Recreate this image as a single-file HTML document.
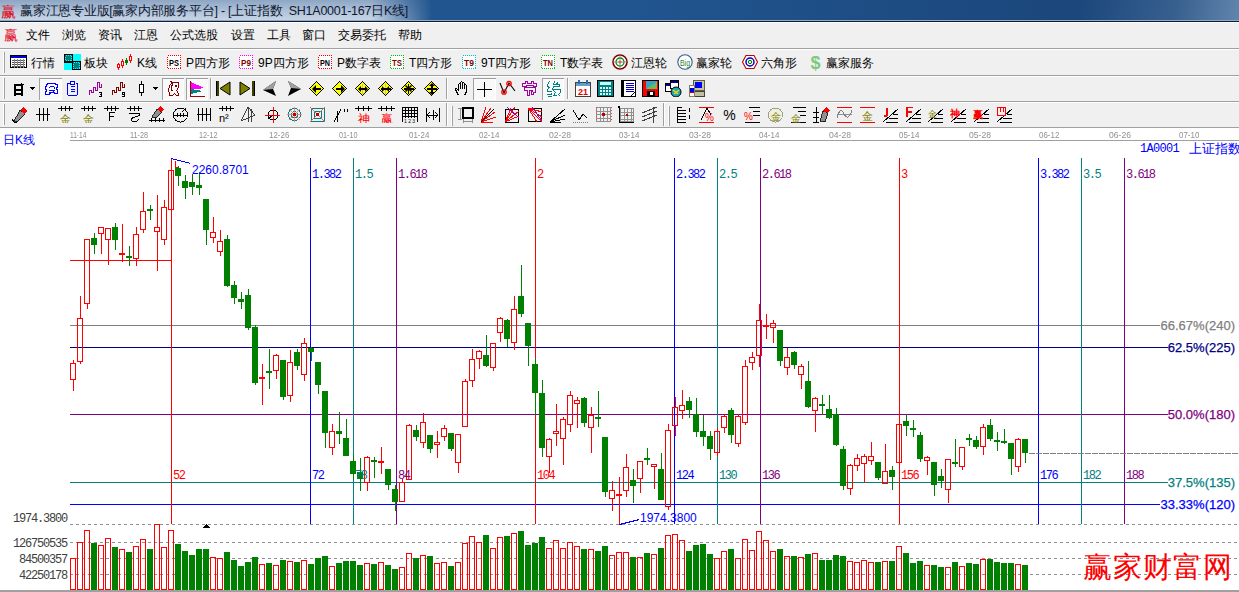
<!DOCTYPE html>
<html><head><meta charset="utf-8"><style>
html,body{margin:0;padding:0;}
body{width:1239px;height:592px;overflow:hidden;position:relative;background:#fff;font-family:"Liberation Sans", sans-serif;}
.t{position:absolute;white-space:nowrap;line-height:1;}
.r{position:absolute;}
.tb{font-size:12px;color:#000;}
svg{position:absolute;left:0;top:0;}
</style></head><body>
<div class="r" style="left:0px;top:0px;width:1239px;height:20px;background:linear-gradient(90deg,#21558f 0%,#21558f 50%,#1b477c 85%,#1b467a 100%);"></div><div class="r" style="left:0px;top:0px;width:432px;height:20px;background:linear-gradient(180deg,#8ea6c3 0%,#a9bdd6 45%,#bccde0 80%,#c6d4e4 100%);-webkit-mask-image:linear-gradient(90deg,#000 0%,#000 86%,transparent 100%);mask-image:linear-gradient(90deg,#000 0%,#000 86%,transparent 100%);"></div><div class="r" style="left:1080px;top:0px;width:159px;height:20px;background:linear-gradient(100deg,rgba(110,145,180,0) 0%,rgba(110,145,180,.35) 60%,rgba(120,155,190,.75) 100%);"></div><div class="r" style="left:0px;top:20px;width:1239px;height:1px;background:#8fabc9;"></div><div class="r" style="left:0px;top:21px;width:1239px;height:1px;background:#0f1e33;"></div><div class="t" style="left:1px;top:4px;font-size:15px;color:#e00010;">赢</div><div class="t" style="left:20px;top:5px;font-size:12.5px;color:#101830;letter-spacing:-0.25px;">赢家江恩专业版[赢家内部服务平台] - [上证指数&nbsp; SH1A0001-167日K线]</div><div class="r" style="left:0px;top:22px;width:1239px;height:26px;background:#f0f0f0;"></div><div class="r" style="left:0px;top:22px;width:1239px;height:1px;background:#ffffff;"></div><div class="r" style="left:0px;top:48px;width:1239px;height:1px;background:#a0a0a0;"></div><div class="r" style="left:0px;top:49px;width:1239px;height:1px;background:#ffffff;"></div><div class="t" style="left:4px;top:28px;font-size:14px;color:#e00018;">赢</div><div class="t" style="left:26px;top:29px;font-size:12px;color:#000;">文件</div><div class="t" style="left:62px;top:29px;font-size:12px;color:#000;">浏览</div><div class="t" style="left:98px;top:29px;font-size:12px;color:#000;">资讯</div><div class="t" style="left:134px;top:29px;font-size:12px;color:#000;">江恩</div><div class="t" style="left:170px;top:29px;font-size:12px;color:#000;">公式选股</div><div class="t" style="left:231px;top:29px;font-size:12px;color:#000;">设置</div><div class="t" style="left:267px;top:29px;font-size:12px;color:#000;">工具</div><div class="t" style="left:302px;top:29px;font-size:12px;color:#000;">窗口</div><div class="t" style="left:338px;top:29px;font-size:12px;color:#000;">交易委托</div><div class="t" style="left:398px;top:29px;font-size:12px;color:#000;">帮助</div><div class="r" style="left:0px;top:50px;width:1239px;height:77px;background:#f0f0f0;"></div><div class="r" style="left:0px;top:75px;width:1239px;height:1px;background:#a0a0a0;"></div><div class="r" style="left:0px;top:76px;width:1239px;height:1px;background:#ffffff;"></div><div class="r" style="left:0px;top:101px;width:1239px;height:1px;background:#a0a0a0;"></div><div class="r" style="left:0px;top:102px;width:1239px;height:1px;background:#ffffff;"></div><div class="r" style="left:0px;top:127px;width:1239px;height:1px;background:#a0a0a0;"></div><div class="r" style="left:3px;top:52px;width:1px;height:21px;background:#ffffff;"></div><div class="r" style="left:4px;top:52px;width:1px;height:21px;background:#a0a0a0;"></div><div class="r" style="left:3px;top:78px;width:1px;height:21px;background:#ffffff;"></div><div class="r" style="left:4px;top:78px;width:1px;height:21px;background:#a0a0a0;"></div><div class="r" style="left:3px;top:104px;width:1px;height:21px;background:#ffffff;"></div><div class="r" style="left:4px;top:104px;width:1px;height:21px;background:#a0a0a0;"></div><svg style="position:absolute;left:10px;top:55px" width="17" height="13" viewBox="0 0 17 13" shape-rendering="crispEdges"><rect x="0.5" y="0.5" width="16" height="12" fill="#fff" stroke="#000"/><rect x="1" y="1" width="15" height="2" fill="#0000e0"/><rect x="2" y="5" width="13" height="1" fill="#555"/><rect x="2" y="7" width="13" height="1" fill="#555"/><rect x="2" y="9" width="13" height="1" fill="#555"/><rect x="2" y="11" width="13" height="1" fill="#555"/><rect x="4" y="4" width="1" height="9" fill="#888"/><rect x="7" y="4" width="1" height="9" fill="#888"/><rect x="10" y="4" width="1" height="9" fill="#888"/><rect x="13" y="4" width="1" height="9" fill="#888"/></svg><svg style="position:absolute;left:64px;top:54px" width="17" height="16" viewBox="0 0 17 16" shape-rendering="crispEdges"><rect x="0" y="0" width="17" height="16" fill="#000"/><rect x="1" y="1" width="7" height="6" fill="#008080"/><rect x="1.5" y="1.5" width="6" height="5" fill="none" stroke="#00ffff" stroke-dasharray="1 1"/><rect x="9" y="0" width="8" height="7" fill="#00ffff"/><rect x="0" y="9" width="8" height="7" fill="#00ffff"/><rect x="9" y="8" width="7" height="7" fill="#008080"/><rect x="9.5" y="8.5" width="6" height="6" fill="none" stroke="#00ffff" stroke-dasharray="1 1"/></svg><svg style="position:absolute;left:117px;top:54px" width="16" height="16" viewBox="0 0 16 16" shape-rendering="crispEdges"><rect x="1" y="9" width="1" height="7" fill="#f00"/><rect x="0.5" y="10.5" width="2" height="3" fill="#fff" stroke="#f00"/><rect x="5" y="5" width="1" height="9" fill="#f00"/><rect x="4.5" y="7.5" width="2" height="4" fill="#fff" stroke="#f00"/><rect x="9" y="4" width="1" height="7" fill="#008000"/><rect x="8" y="6" width="3" height="3" fill="#008000"/><rect x="13" y="0" width="1" height="9" fill="#f00"/><rect x="12.5" y="2.5" width="2" height="4" fill="#fff" stroke="#f00"/></svg><svg style="position:absolute;left:167px;top:55px" width="14" height="14" viewBox="0 0 14 14" shape-rendering="crispEdges"><rect x="0.5" y="0.5" width="13" height="13" fill="#fff" stroke="#ff0000" stroke-dasharray="1 1"/><text x="7" y="10.5" font-size="8.5" font-weight="bold" font-family="Liberation Sans" text-anchor="middle" fill="#000" textLength="10" lengthAdjust="spacingAndGlyphs">PS</text></svg><svg style="position:absolute;left:239px;top:55px" width="14" height="14" viewBox="0 0 14 14" shape-rendering="crispEdges"><rect x="0.5" y="0.5" width="13" height="13" fill="#fff" stroke="#ff00ff" stroke-dasharray="1 1"/><text x="7" y="10.5" font-size="8.5" font-weight="bold" font-family="Liberation Sans" text-anchor="middle" fill="#800000" textLength="10" lengthAdjust="spacingAndGlyphs">P9</text></svg><svg style="position:absolute;left:318px;top:55px" width="14" height="14" viewBox="0 0 14 14" shape-rendering="crispEdges"><rect x="0.5" y="0.5" width="13" height="13" fill="#fff" stroke="#ff0000" stroke-dasharray="1 1"/><text x="7" y="10.5" font-size="8.5" font-weight="bold" font-family="Liberation Sans" text-anchor="middle" fill="#000" textLength="10" lengthAdjust="spacingAndGlyphs">PN</text></svg><svg style="position:absolute;left:390px;top:55px" width="14" height="14" viewBox="0 0 14 14" shape-rendering="crispEdges"><rect x="0.5" y="0.5" width="13" height="13" fill="#fff" stroke="#00c000" stroke-dasharray="1 1"/><text x="7" y="10.5" font-size="8.5" font-weight="bold" font-family="Liberation Sans" text-anchor="middle" fill="#800000" textLength="10" lengthAdjust="spacingAndGlyphs">TS</text></svg><svg style="position:absolute;left:462px;top:55px" width="14" height="14" viewBox="0 0 14 14" shape-rendering="crispEdges"><rect x="0.5" y="0.5" width="13" height="13" fill="#fff" stroke="#00c0c0" stroke-dasharray="1 1"/><text x="7" y="10.5" font-size="8.5" font-weight="bold" font-family="Liberation Sans" text-anchor="middle" fill="#800000" textLength="10" lengthAdjust="spacingAndGlyphs">T9</text></svg><svg style="position:absolute;left:541px;top:55px" width="14" height="14" viewBox="0 0 14 14" shape-rendering="crispEdges"><rect x="0.5" y="0.5" width="13" height="13" fill="#fff" stroke="#00c000" stroke-dasharray="1 1"/><text x="7" y="10.5" font-size="8.5" font-weight="bold" font-family="Liberation Sans" text-anchor="middle" fill="#800000" textLength="10" lengthAdjust="spacingAndGlyphs">TN</text></svg><svg style="position:absolute;left:612px;top:54px" width="16" height="16" viewBox="0 0 16 16" shape-rendering="crispEdges"><g shape-rendering="auto"><circle cx="8" cy="8" r="7" fill="#fff" stroke="#800000" stroke-width="1.6"/><circle cx="8" cy="8" r="4" fill="none" stroke="#008000" stroke-width="1.3"/><path d="M1.5,8 H14.5 M8,1.5 V14.5" stroke="#909090" stroke-width="1"/><circle cx="8" cy="8" r="1.5" fill="#e06060"/></g></svg><svg style="position:absolute;left:677px;top:54px" width="16" height="16" viewBox="0 0 16 16" shape-rendering="crispEdges"><g shape-rendering="auto"><circle cx="8" cy="8" r="7.2" fill="#fff" stroke="#2f5f8f" stroke-width="1.1"/><text x="8" y="11.5" font-size="9" font-family="Liberation Sans" text-anchor="middle" fill="#308030" textLength="10" lengthAdjust="spacingAndGlyphs">Big</text></g></svg><svg style="position:absolute;left:742px;top:54px" width="16" height="16" viewBox="0 0 16 16" shape-rendering="crispEdges"><g shape-rendering="auto"><polygon points="4,1.5 12,1.5 15.5,8 12,14.5 4,14.5 0.5,8" fill="#fff" stroke="#c00000" stroke-width="1.1"/><circle cx="8" cy="8" r="4" fill="none" stroke="#0000c0" stroke-width="1.5"/><circle cx="8" cy="8" r="1.7" fill="none" stroke="#008000" stroke-width="1"/></g></svg><svg style="position:absolute;left:809px;top:54px" width="13" height="17" viewBox="0 0 13 17" shape-rendering="crispEdges"><text x="6.5" y="15" font-size="18" font-family="Liberation Sans" text-anchor="middle" fill="#80c880" font-weight="bold" shape-rendering="auto">$</text></svg><div class="t tb" style="left:31px;top:57px;">行情</div><div class="t tb" style="left:84px;top:57px;">板块</div><div class="t tb" style="left:137px;top:57px;">K线</div><div class="t tb" style="left:186px;top:57px;">P四方形</div><div class="t tb" style="left:258px;top:57px;">9P四方形</div><div class="t tb" style="left:337px;top:57px;">P数字表</div><div class="t tb" style="left:409px;top:57px;">T四方形</div><div class="t tb" style="left:481px;top:57px;">9T四方形</div><div class="t tb" style="left:560px;top:57px;">T数字表</div><div class="t tb" style="left:631px;top:57px;">江恩轮</div><div class="t tb" style="left:696px;top:57px;">赢家轮</div><div class="t tb" style="left:761px;top:57px;">六角形</div><div class="t tb" style="left:826px;top:57px;">赢家服务</div><svg style="position:absolute;left:14px;top:83px" width="11" height="13" viewBox="0 0 11 13" shape-rendering="crispEdges"><rect x="0" y="1" width="2" height="12" fill="#000"/><rect x="7" y="1" width="2" height="12" fill="#000"/><rect x="0" y="1" width="9" height="2" fill="#000"/><rect x="2" y="6" width="5" height="2" fill="#000"/><rect x="0" y="10" width="9" height="2" fill="#000"/><rect x="7" y="0" width="1" height="1" fill="#000"/><rect x="9" y="1" width="1" height="1" fill="#000"/></svg><svg style="position:absolute;left:30px;top:87px" width="6" height="3" viewBox="0 0 6 3" shape-rendering="crispEdges"><polygon points="0,0 5,0 2.5,3" fill="#000"/></svg><div class="r" style="left:39px;top:78px;width:23px;height:22px;background:#f9f9f9;box-shadow:inset 1px 1px 0 #a0a0a0, inset -1px -1px 0 #ffffff;"></div><svg style="position:absolute;left:44px;top:82px" width="15" height="15" viewBox="0 0 15 15" shape-rendering="crispEdges"><g fill="none" stroke="#0000ff" stroke-width="1" transform="translate(0.5,0.5)"><path d="M3,1 H11 V2 H13 V5 H12 V7 H13 V11 H10 V10 H5 V12 H1 V9 H2 V7 H1 V4 H2 V2 H3 Z"/><path d="M4,6 L6,4 H9 L11,7 M4,8 H10 M6,9 V11 M9,8 V10"/></g></svg><svg style="position:absolute;left:66px;top:81px" width="13" height="16" viewBox="0 0 13 16" shape-rendering="crispEdges"><g fill="none" stroke="#0000ff" stroke-width="1" transform="translate(0.5,0.5)"><path d="M3,2 H1 V13 L2,14 H10 L11,13 V2 H9 M4,0 H8 V3 H4 Z M4,5 H8 M4,7.5 H8 M4,10 H8"/></g></svg><svg style="position:absolute;left:88px;top:81px" width="16" height="16" viewBox="0 0 16 16" shape-rendering="crispEdges"><g fill="none" stroke="#a000a0" stroke-width="1" transform="translate(0.5,0.5)"><path d="M1,13 V9 H3 V11 H5 V6 H7 V9 H9 V1 H11 V6 H13 V2"/></g><g fill="#000"><rect x="11" y="11" width="3" height="1"/><rect x="13" y="12" width="1" height="3"/><rect x="12" y="13" width="1" height="1"/><rect x="11" y="15" width="3" height="1"/></g></svg><svg style="position:absolute;left:111px;top:81px" width="16" height="16" viewBox="0 0 16 16" shape-rendering="crispEdges"><g fill="none" stroke="#800000" stroke-width="1" transform="translate(0.5,0.5)"><path d="M1,13 V9 H3 V11 H5 V6 H7 V9 H9 V1 H11 V6 H13 V2"/></g><g fill="#000"><rect x="11" y="11" width="3" height="1"/><rect x="11" y="11" width="1" height="3"/><rect x="13" y="11" width="1" height="5"/><rect x="11" y="13" width="3" height="1"/><rect x="11" y="15" width="3" height="1"/></g></svg><svg style="position:absolute;left:139px;top:81px" width="6" height="15" viewBox="0 0 6 15" shape-rendering="crispEdges"><rect x="2" y="0" width="1" height="15" fill="#000"/><rect x="0.5" y="3.5" width="4" height="8" fill="#fff" stroke="#000"/></svg><svg style="position:absolute;left:153px;top:87px" width="6" height="3" viewBox="0 0 6 3" shape-rendering="crispEdges"><polygon points="0,0 5,0 2.5,3" fill="#000"/></svg><div class="r" style="left:162px;top:78px;width:22px;height:22px;background:#f9f9f9;box-shadow:inset 1px 1px 0 #a0a0a0, inset -1px -1px 0 #ffffff;"></div><svg style="position:absolute;left:166px;top:81px" width="15" height="15" viewBox="0 0 15 15" shape-rendering="crispEdges"><g fill="none" stroke="#800000" stroke-width="1"><path d="M3.5,0.5 H5.5 V2.5 L3.5,4.5 V6.5 L2.5,7.5 V10.5 L3.5,11.5 V14.5 H6.5 L8.5,12.5 L10.5,14.5 H12.5 V12.5 L10.5,9.5 L12.5,6.5 V1.5 H6.5 V3.5 L5.5,5.5 V8.5 L6.5,10.5"/></g><rect x="9" y="4" width="2" height="2" fill="#800000"/></svg><div class="r" style="left:186px;top:78px;width:22px;height:22px;background:#f9f9f9;box-shadow:inset 1px 1px 0 #a0a0a0, inset -1px -1px 0 #ffffff;"></div><svg style="position:absolute;left:189px;top:80px" width="16" height="17" viewBox="0 0 16 17" shape-rendering="crispEdges"><rect x="1" y="1" width="1" height="16" fill="#a00000"/><rect x="1" y="16" width="15" height="1" fill="#a00000"/><polygon points="2,2 15,8 2,10" fill="#ff00ff"/><polygon points="2,9 14,11 2,14" fill="#008080"/></svg><div class="r" style="left:210px;top:78px;width:1px;height:21px;background:#a0a0a0"></div><div class="r" style="left:211px;top:78px;width:1px;height:21px;background:#fff"></div><svg style="position:absolute;left:216px;top:81px" width="15" height="15" viewBox="0 0 15 15" shape-rendering="crispEdges"><rect x="0" y="0" width="3" height="15" fill="#404000"/><rect x="0" y="0" width="1" height="15" fill="#000"/><polygon points="14,1 4,7.5 14,14" fill="#808000" stroke="#000" stroke-width="1" shape-rendering="auto"/></svg><svg style="position:absolute;left:239px;top:81px" width="16" height="15" viewBox="0 0 16 15" shape-rendering="crispEdges"><rect x="13" y="0" width="3" height="15" fill="#404000"/><rect x="15" y="0" width="1" height="15" fill="#000"/><polygon points="1,1 11,7.5 1,14" fill="#808000" stroke="#000" stroke-width="1" shape-rendering="auto"/></svg><svg style="position:absolute;left:263px;top:81px" width="14" height="15" viewBox="0 0 14 15" shape-rendering="crispEdges"><g shape-rendering="auto"><polygon points="13,0 0,9 13,15 10,8" fill="#000"/><polygon points="13,0 0,9 10,8" fill="#a0a0a0"/></g></svg><svg style="position:absolute;left:287px;top:81px" width="15" height="15" viewBox="0 0 15 15" shape-rendering="crispEdges"><g shape-rendering="auto"><polygon points="1,0 14,8 1,15 4,7" fill="#000"/><polygon points="1,0 14,8 4,7" fill="#a0a0a0"/></g></svg><svg style="position:absolute;left:309px;top:81px" width="16" height="16" viewBox="0 0 16 16" shape-rendering="crispEdges"><polygon points="7.5,0 15,7.5 7.5,15 0,7.5" fill="#000"/><polygon points="7.5,1.4 13.6,7.5 7.5,13.6 1.4,7.5" fill="#ffff00"/><rect x="5" y="7" width="7" height="2" fill="#000"/><polygon points="3,8 7,4 7,12" fill="#000" shape-rendering="auto"/></svg><svg style="position:absolute;left:332px;top:81px" width="16" height="16" viewBox="0 0 16 16" shape-rendering="crispEdges"><polygon points="7.5,0 15,7.5 7.5,15 0,7.5" fill="#000"/><polygon points="7.5,1.4 13.6,7.5 7.5,13.6 1.4,7.5" fill="#ffff00"/><rect x="4" y="7" width="7" height="2" fill="#000"/><polygon points="13,8 9,4 9,12" fill="#000" shape-rendering="auto"/></svg><svg style="position:absolute;left:355px;top:81px" width="16" height="16" viewBox="0 0 16 16" shape-rendering="crispEdges"><polygon points="7.5,0 15,7.5 7.5,15 0,7.5" fill="#000"/><polygon points="7.5,1.4 13.6,7.5 7.5,13.6 1.4,7.5" fill="#ffff00"/><rect x="7" y="3" width="1" height="10" fill="#c0c0a0"/><rect x="5" y="7" width="6" height="2" fill="#000"/><polygon points="3,8 6,5 6,11" fill="#000" shape-rendering="auto"/><polygon points="13,8 10,5 10,11" fill="#000" shape-rendering="auto"/></svg><svg style="position:absolute;left:378px;top:81px" width="16" height="16" viewBox="0 0 16 16" shape-rendering="crispEdges"><polygon points="7.5,0 15,7.5 7.5,15 0,7.5" fill="#000"/><polygon points="7.5,1.4 13.6,7.5 7.5,13.6 1.4,7.5" fill="#ffff00"/><rect x="7" y="3" width="1" height="10" fill="#c0c0a0"/><rect x="3" y="7" width="10" height="2" fill="#000"/><polygon points="7,8 4,5 4,11" fill="#000" shape-rendering="auto"/><polygon points="8,8 11,5 11,11" fill="#000" shape-rendering="auto"/></svg><svg style="position:absolute;left:401px;top:81px" width="16" height="16" viewBox="0 0 16 16" shape-rendering="crispEdges"><polygon points="7.5,0 15,7.5 7.5,15 0,7.5" fill="#000"/><polygon points="7.5,1.4 13.6,7.5 7.5,13.6 1.4,7.5" fill="#ffff00"/><rect x="7" y="3" width="1" height="10" fill="#000"/><rect x="3" y="7" width="10" height="2" fill="#000"/><path d="M4.5,4.5 L10.5,10.5 M10.5,4.5 L4.5,10.5" stroke="#000" stroke-width="1.5" shape-rendering="auto"/></svg><svg style="position:absolute;left:424px;top:81px" width="16" height="16" viewBox="0 0 16 16" shape-rendering="crispEdges"><polygon points="7.5,0 15,7.5 7.5,15 0,7.5" fill="#000"/><polygon points="7.5,1.4 13.6,7.5 7.5,13.6 1.4,7.5" fill="#ffff00"/><rect x="7" y="3" width="2" height="10" fill="#000"/><rect x="3" y="7" width="10" height="2" fill="#000"/><polygon points="8,2 5,5 11,5" fill="#000" shape-rendering="auto"/><polygon points="8,14 5,11 11,11" fill="#000" shape-rendering="auto"/></svg><div class="r" style="left:446px;top:78px;width:1px;height:21px;background:#a0a0a0"></div><div class="r" style="left:447px;top:78px;width:1px;height:21px;background:#fff"></div><svg style="position:absolute;left:454px;top:80px" width="15" height="17" viewBox="0 0 15 17" shape-rendering="crispEdges"><g fill="none" stroke="#000" stroke-width="1" transform="translate(0.5,0.5)"><path d="M4,15 L1,9 V8 H2 L4,10 V4 L5,3 L6,4 V8 M6,6 V2 L7,1 L8,2 V8 M8,7 V3 L9,2 L10,3 V8 M10,7 V5 L11,4 L12,5 V11 L10,15"/></g></svg><div class="r" style="left:473px;top:78px;width:23px;height:22px;background:#f9f9f9;box-shadow:inset 1px 1px 0 #a0a0a0, inset -1px -1px 0 #ffffff;"></div><svg style="position:absolute;left:476px;top:81px" width="17" height="17" viewBox="0 0 17 17" shape-rendering="crispEdges"><rect x="8" y="1" width="1" height="15" fill="#000"/><rect x="1" y="8" width="15" height="1" fill="#000"/></svg><svg style="position:absolute;left:499px;top:80px" width="17" height="16" viewBox="0 0 17 16" shape-rendering="crispEdges"><g shape-rendering="auto"><path d="M1,3 L5,13 L10,3 L16,11" fill="none" stroke="#000" stroke-width="1.1"/><circle cx="5" cy="12" r="2.2" fill="none" stroke="#f00" stroke-width="1.3"/><circle cx="10" cy="3.5" r="2.2" fill="none" stroke="#f00" stroke-width="1.3"/></g></svg><svg style="position:absolute;left:522px;top:81px" width="16" height="16" viewBox="0 0 16 16" shape-rendering="crispEdges"><g fill="none" stroke="#a000a0" stroke-width="1" transform="translate(0.5,0.5)"><path d="M0,2 H3 V0 H5 V2 H9 V0 H11 V2 H14 V5 H11 V4 H4 V5 H0 Z M2,6 H13 V11 H11 V13 H9 V9 H7 V14 H5 V9 H2 Z"/></g><rect x="9" y="9" width="2" height="2" fill="#a000a0"/></svg><div class="r" style="left:542px;top:78px;width:22px;height:22px;background:#f9f9f9;box-shadow:inset 1px 1px 0 #a0a0a0, inset -1px -1px 0 #ffffff;"></div><svg style="position:absolute;left:546px;top:81px" width="16" height="17" viewBox="0 0 16 17" shape-rendering="crispEdges"><g fill="none" stroke="#008080" stroke-width="1" transform="translate(0.5,0.5)"><path d="M3,0 L1,3 V5 L3,6 L1,8 V10 H5 M0,13 H5 V11 M8,0 L7,3 H13 V5 H7 L6,8 H14 V11 L12,13 L14,15 M7,9 L9,11 L7,14 H10 M10,2 L12,1 M1,15 H5"/></g></svg><div class="r" style="left:567px;top:78px;width:1px;height:21px;background:#a0a0a0"></div><div class="r" style="left:568px;top:78px;width:1px;height:21px;background:#fff"></div><svg style="position:absolute;left:575px;top:80px" width="16" height="17" viewBox="0 0 16 17" shape-rendering="crispEdges"><rect x="0.5" y="2.5" width="15" height="14" fill="#fff" stroke="#404040"/><rect x="1" y="3" width="14" height="3" fill="#5fa0d0"/><rect x="3" y="0" width="2" height="4" fill="#3070a0"/><rect x="11" y="0" width="2" height="4" fill="#3070a0"/><text x="8" y="15" font-size="9" font-weight="bold" font-family="Liberation Sans" text-anchor="middle" fill="#e00000" shape-rendering="auto">21</text></svg><svg style="position:absolute;left:597px;top:80px" width="17" height="17" viewBox="0 0 17 17" shape-rendering="crispEdges"><rect x="0.5" y="0.5" width="16" height="16" fill="#008080" stroke="#000"/><rect x="3" y="2" width="11" height="3" fill="#c0ffff"/><rect x="3" y="7" width="2" height="2" fill="#e0ffff"/><rect x="3" y="10" width="2" height="2" fill="#e0ffff"/><rect x="3" y="13" width="2" height="2" fill="#e0ffff"/><rect x="6" y="7" width="2" height="2" fill="#e0ffff"/><rect x="6" y="10" width="2" height="2" fill="#e0ffff"/><rect x="6" y="13" width="2" height="2" fill="#e0ffff"/><rect x="9" y="7" width="2" height="2" fill="#e0ffff"/><rect x="9" y="10" width="2" height="2" fill="#e0ffff"/><rect x="9" y="13" width="2" height="2" fill="#e0ffff"/><rect x="12" y="7" width="2" height="2" fill="#e0ffff"/><rect x="12" y="10" width="2" height="2" fill="#e0ffff"/><rect x="12" y="13" width="2" height="2" fill="#e0ffff"/></svg><svg style="position:absolute;left:620px;top:80px" width="17" height="17" viewBox="0 0 17 17" shape-rendering="crispEdges"><rect x="1.5" y="0.5" width="14" height="16" fill="#fff" stroke="#000"/><rect x="1" y="0" width="3" height="17" fill="#000"/><rect x="6" y="3" width="8" height="1" fill="#0000c0"/><rect x="6" y="5" width="8" height="1" fill="#0000c0"/><rect x="6" y="7" width="8" height="1" fill="#0000c0"/><rect x="6" y="9" width="8" height="1" fill="#0000c0"/><rect x="6" y="11" width="8" height="1" fill="#0000c0"/><path d="M11,16 L15,12" stroke="#000"/></svg><svg style="position:absolute;left:642px;top:80px" width="17" height="17" viewBox="0 0 17 17" shape-rendering="crispEdges"><rect x="0" y="0" width="17" height="17" fill="#000"/><rect x="1" y="1" width="15" height="15" fill="#ff0000"/><rect x="4" y="1" width="11" height="8" fill="#40a0c0"/><polygon points="4,9 15,2 15,9" fill="#60c060"/><rect x="5" y="11" width="8" height="5" fill="#000"/><rect x="8" y="12" width="3" height="3" fill="#fff"/></svg><svg style="position:absolute;left:665px;top:80px" width="17" height="17" viewBox="0 0 17 17" shape-rendering="crispEdges"><rect x="0.5" y="3.5" width="8" height="8" fill="#fff" stroke="#000"/><rect x="1" y="4" width="7" height="2" fill="#00008b"/><rect x="5.5" y="0.5" width="8" height="8" fill="#fff" stroke="#000"/><rect x="6" y="1" width="7" height="2" fill="#00008b"/><g shape-rendering="auto"><circle cx="11" cy="12" r="5" fill="#20a0c0" stroke="#000"/><path d="M8,10 L13,14 M9,14 L14,10" stroke="#e0e000" stroke-width="1.5"/></g></svg><svg style="position:absolute;left:688px;top:80px" width="17" height="17" viewBox="0 0 17 17" shape-rendering="crispEdges"><rect x="5.5" y="0.5" width="11" height="10" fill="#c8c8a0" stroke="#606040"/><rect x="7" y="2" width="7" height="6" fill="#0000ff"/><rect x="6" y="11" width="10" height="5" fill="#c0c0a0" stroke="#404040"/><rect x="1.5" y="5.5" width="5" height="11" fill="#fff" stroke="#808060"/><rect x="2" y="8" width="4" height="4" fill="#0000e0"/><rect x="2" y="12" width="4" height="1" fill="#c00000"/></svg><svg style="position:absolute;left:11px;top:106px" width="17" height="17" viewBox="0 0 17 17" shape-rendering="crispEdges"><g shape-rendering="crispEdges"><polygon points="3,15 9,4 14,8 6,16" fill="#909090" stroke="#000" stroke-width="0.8"/><polygon points="9,4 12,1 16,5 14,8" fill="#ff0000"/><path d="M1,13 L3,16 L6,16" stroke="#000" fill="none"/></g></svg><svg style="position:absolute;left:34px;top:106px" width="17" height="17" viewBox="0 0 17 17" shape-rendering="crispEdges"><g shape-rendering="crispEdges"><path d="M2,8.5 H16 M5,2 V15 M9,2 V15 M13,2 V15" stroke="#000" stroke-width="1" fill="none"/></g></svg><svg style="position:absolute;left:57px;top:106px" width="17" height="17" viewBox="0 0 17 17" shape-rendering="crispEdges"><g shape-rendering="crispEdges"><path d="M1,2.5 H16 M4,0 V5 M8,0 V5 M12,0 V5" stroke="#000" stroke-width="1" fill="none"/><text x="8.5" y="16.5" font-size="11" font-family="Liberation Sans" text-anchor="middle" fill="#808000">金</text></g></svg><svg style="position:absolute;left:80px;top:106px" width="17" height="17" viewBox="0 0 17 17" shape-rendering="crispEdges"><g shape-rendering="crispEdges"><path d="M1,2.5 H16 M4,0 V5 M8,0 V5 M12,0 V5" stroke="#000" stroke-width="1" fill="none"/><text x="8.5" y="16.5" font-size="11" font-family="Liberation Sans" text-anchor="middle" fill="#808000">金</text></g></svg><svg style="position:absolute;left:103px;top:106px" width="17" height="17" viewBox="0 0 17 17" shape-rendering="crispEdges"><g shape-rendering="crispEdges"><path d="M1,2.5 H16 M4,0 V5 M8,0 V5 M12,0 V5" stroke="#000" stroke-width="1" fill="none"/><path d="M6,6 V15 M6,6 H12 M6,10 H11" stroke="#000" stroke-width="1" fill="none"/></g></svg><svg style="position:absolute;left:126px;top:106px" width="17" height="17" viewBox="0 0 17 17" shape-rendering="crispEdges"><g shape-rendering="crispEdges"><path d="M1,2.5 H16 M4,0 V5 M8,0 V5 M12,0 V5" stroke="#000" stroke-width="1" fill="none"/><path d="M3,7 H13 Q15,10 9,11 Q4,12 6,15 Q10,17 13,13" stroke="#000" stroke-width="1" fill="none"/></g></svg><svg style="position:absolute;left:149px;top:106px" width="17" height="17" viewBox="0 0 17 17" shape-rendering="crispEdges"><g shape-rendering="crispEdges"><polygon points="3,11 8,3 13,6 7,12" fill="#909090" stroke="#000" stroke-width="0.8"/><polygon points="8,3 11,0 15,3 13,6" fill="#ff0000"/><path d="M0,14 H16 M2,12 V16 M6,12 V16 M10,12 V16 M14,12 V16" stroke="#000" stroke-width="1" fill="none"/></g></svg><svg style="position:absolute;left:172px;top:106px" width="17" height="17" viewBox="0 0 17 17" shape-rendering="crispEdges"><g shape-rendering="crispEdges"><circle cx="8.5" cy="9" r="7" fill="none" stroke="#000" stroke-width="1"/><path d="M2,9 H15 M5,7 V11 M8,7 V11 M11,7 V11 M14,2 L10,6" stroke="#000" stroke-width="1" fill="none"/></g></svg><svg style="position:absolute;left:195px;top:106px" width="17" height="17" viewBox="0 0 17 17" shape-rendering="crispEdges"><g shape-rendering="crispEdges"><path d="M2,8.5 H16 M3,2 V15 M7,2 V15 M11,2 V15 M15,2 V15" stroke="#000" stroke-width="1" fill="none"/></g></svg><svg style="position:absolute;left:218px;top:106px" width="17" height="17" viewBox="0 0 17 17" shape-rendering="crispEdges"><g shape-rendering="crispEdges"><path d="M1,2.5 H16 M4,0 V5 M8,0 V5 M12,0 V5" stroke="#000" stroke-width="1" fill="none"/><text x="1" y="16" font-size="11" font-family="Liberation Sans" fill="#000">n²</text></g></svg><svg style="position:absolute;left:240px;top:106px" width="17" height="17" viewBox="0 0 17 17" shape-rendering="crispEdges"><g shape-rendering="crispEdges"><path d="M1,15 L8,1 L15,9 L1,15 M8,1 V16 M11,3 V16" stroke="#404040" stroke-width="1" fill="none"/></g></svg><svg style="position:absolute;left:264px;top:106px" width="17" height="17" viewBox="0 0 17 17" shape-rendering="crispEdges"><g shape-rendering="crispEdges"><circle cx="9" cy="9" r="5" fill="none" stroke="#000" stroke-width="1"/><path d="M1,9 H16 M9,1 V17" stroke="#f00" stroke-width="1" fill="none"/><path d="M9,9 L4,13" stroke="#000" stroke-width="1"/></g></svg><svg style="position:absolute;left:286px;top:106px" width="17" height="17" viewBox="0 0 17 17" shape-rendering="crispEdges"><g shape-rendering="crispEdges"><circle cx="8.5" cy="8.5" r="6" fill="none" stroke="#008080" stroke-width="1"/><circle cx="8.5" cy="8.5" r="3" fill="none" stroke="#008080" stroke-width="1"/><path d="M1,8.5 H16 M8.5,1 V16 M3,3 L14,14 M14,3 L3,14" stroke="#f08080" stroke-width="0.9" fill="none"/><circle cx="8.5" cy="8.5" r="1.5" fill="#c00000"/></g></svg><svg style="position:absolute;left:309px;top:106px" width="17" height="17" viewBox="0 0 17 17" shape-rendering="crispEdges"><g shape-rendering="crispEdges"><rect x="2" y="2" width="13" height="13" fill="none" stroke="#008080" stroke-width="1"/><rect x="5" y="5" width="7" height="7" fill="none" stroke="#008080" stroke-width="1"/><path d="M1,1 L16,16 M16,1 L1,16" stroke="#f06060" stroke-width="1" fill="none"/><circle cx="8.5" cy="8.5" r="1.6" fill="#c00000"/></g></svg><svg style="position:absolute;left:332px;top:106px" width="17" height="17" viewBox="0 0 17 17" shape-rendering="crispEdges"><g shape-rendering="crispEdges"><path d="M2,16 L9,3 M5,16 V5 M12,3 V6 M15,3 V6" stroke="#000" stroke-width="1" fill="none"/></g></svg><svg style="position:absolute;left:355px;top:106px" width="17" height="17" viewBox="0 0 17 17" shape-rendering="crispEdges"><g shape-rendering="crispEdges"><path d="M0,2.5 H17 M3,0 V5 M8,0 V5 M13,0 V5" stroke="#000" stroke-width="1" fill="none"/><text x="8.5" y="16.5" font-size="12" font-family="Liberation Sans" text-anchor="middle" fill="#ff0000">神</text></g></svg><svg style="position:absolute;left:378px;top:106px" width="17" height="17" viewBox="0 0 17 17" shape-rendering="crispEdges"><g shape-rendering="crispEdges"><path d="M0,2.5 H17 M3,0 V5 M8,0 V5 M13,0 V5" stroke="#000" stroke-width="1" fill="none"/><text x="8.5" y="16.5" font-size="12" font-family="Liberation Sans" text-anchor="middle" fill="#ff0000">赢</text></g></svg><svg style="position:absolute;left:401px;top:106px" width="17" height="17" viewBox="0 0 17 17" shape-rendering="crispEdges"><g shape-rendering="crispEdges"><path d="M1,1 V16 M1,1 H16 V16 M1,4 H16 M1,7 H16 M1,10 H16 M4,1 V12 M7,1 V12 M10,1 V12 M13,1 V12" stroke="#000" stroke-width="1" fill="none"/><text x="3" y="17" font-size="5" font-family="Liberation Sans" fill="#000">1 2 3</text></g></svg><svg style="position:absolute;left:424px;top:106px" width="17" height="17" viewBox="0 0 17 17" shape-rendering="crispEdges"><g shape-rendering="crispEdges"><path d="M2,2 V16 M15,2 V16 M3,9 H14 M3,9 L6,6 M3,9 L6,12 M14,9 L11,6 M14,9 L11,12 M9,4 V14" stroke="#000" stroke-width="1" fill="none"/></g></svg><div class="r" style="left:446px;top:103px;width:1px;height:23px;background:#a0a0a0"></div><div class="r" style="left:447px;top:103px;width:1px;height:23px;background:#fff"></div><div class="r" style="left:451px;top:106px;width:1px;height:20px;background:#fff"></div><div class="r" style="left:452px;top:106px;width:1px;height:20px;background:#a0a0a0"></div><svg style="position:absolute;left:457px;top:106px" width="17" height="17" viewBox="0 0 17 17" shape-rendering="crispEdges"><g shape-rendering="crispEdges"><rect x="6" y="2" width="10" height="10" fill="none" stroke="#000" stroke-width="1.5"/><path d="M1,2 H5 M3,2 V13 M1,13 H5 M6,15 H15 M6,13 V17 M15,13 V17" stroke="#909090" stroke-width="1" fill="none"/></g></svg><svg style="position:absolute;left:480px;top:106px" width="17" height="17" viewBox="0 0 17 17" shape-rendering="crispEdges"><g shape-rendering="crispEdges"><path d="M1,16 L6,1 M1,16 L11,2 M1,16 L15,6 M1,16 L16,11 M1,16 L13,16" stroke="#ff0000" stroke-width="1" fill="none"/><path d="M1,16 L14,3" stroke="#000" stroke-width="1"/></g></svg><svg style="position:absolute;left:503px;top:106px" width="17" height="17" viewBox="0 0 17 17" shape-rendering="crispEdges"><g shape-rendering="crispEdges"><rect x="2" y="3" width="13" height="13" fill="none" stroke="#000" stroke-width="1"/><path d="M2,16 L12,1 M2,16 L16,5 M2,16 L16,10 M2,16 L8,2" stroke="#ff0000" stroke-width="1" fill="none"/><path d="M4,1 L16,12" stroke="#a000a0" stroke-width="1"/></g></svg><svg style="position:absolute;left:526px;top:106px" width="17" height="17" viewBox="0 0 17 17" shape-rendering="crispEdges"><g shape-rendering="crispEdges"><rect x="2" y="2" width="13" height="13" fill="none" stroke="#000" stroke-width="1"/><path d="M2,2 L16,16 M2,2 L16,11 M2,2 L11,16 M2,2 L16,6" stroke="#ff0000" stroke-width="1" fill="none"/><path d="M6,1 L16,15" stroke="#a000a0" stroke-width="1"/></g></svg><svg style="position:absolute;left:549px;top:106px" width="17" height="17" viewBox="0 0 17 17" shape-rendering="crispEdges"><g shape-rendering="crispEdges"><path d="M1,16 L16,3 M1,16 L16,9 M1,16 L16,13 M1,16 H12" stroke="#000" stroke-width="1" fill="none"/></g></svg><svg style="position:absolute;left:572px;top:106px" width="17" height="17" viewBox="0 0 17 17" shape-rendering="crispEdges"><g shape-rendering="crispEdges"><path d="M1,4 L7,14 L11,8 L15,12" stroke="#000" stroke-width="1" fill="none"/><path d="M1,16 H16" stroke="#808080" stroke-dasharray="1 1" fill="none"/></g></svg><svg style="position:absolute;left:595px;top:106px" width="17" height="17" viewBox="0 0 17 17" shape-rendering="crispEdges"><g shape-rendering="crispEdges"><rect x="1.5" y="1.5" width="14" height="14" fill="none" stroke="#909090"/><path d="M5,1 V16 M8.5,1 V16 M12,1 V16 M1,5 H16 M1,8.5 H16 M1,12 H16" stroke="#909090" stroke-width="1" fill="none"/><path d="M1,1 V16 M16,1 V16" stroke="#ff4040" stroke-dasharray="1 2" fill="none"/><circle cx="8.5" cy="8.5" r="1.5" fill="#c00000"/></g></svg><svg style="position:absolute;left:618px;top:106px" width="17" height="17" viewBox="0 0 17 17" shape-rendering="crispEdges"><g shape-rendering="crispEdges"><rect x="2.5" y="2.5" width="13" height="13" fill="none" stroke="#909090"/><path d="M6,2 V16 M9.5,2 V16 M13,2 V16 M2,6 H16 M2,9.5 H16 M2,13 H16" stroke="#909090" stroke-width="1" fill="none"/><path d="M1,0 V16 H16 M1,0 L0,2 M1,0 L2,2" stroke="#000" stroke-width="1" fill="none"/><circle cx="9" cy="9" r="1.5" fill="#c00000"/></g></svg><svg style="position:absolute;left:641px;top:106px" width="17" height="17" viewBox="0 0 17 17" shape-rendering="crispEdges"><g shape-rendering="crispEdges"><path d="M1,7 L16,1 M1,11 L16,5 M1,15 L16,9 M12,1 V17" stroke="#404040" stroke-width="1" fill="none"/></g></svg><div class="r" style="left:663px;top:103px;width:1px;height:23px;background:#a0a0a0"></div><div class="r" style="left:664px;top:103px;width:1px;height:23px;background:#fff"></div><div class="r" style="left:668px;top:106px;width:1px;height:20px;background:#fff"></div><div class="r" style="left:669px;top:106px;width:1px;height:20px;background:#a0a0a0"></div><svg style="position:absolute;left:675px;top:106px" width="17" height="17" viewBox="0 0 17 17" shape-rendering="crispEdges"><g shape-rendering="crispEdges"><path d="M2,1 V16 M2,1 H7 M2,4 H11 M2,7 H11 M2,10 H11 M2,13 H11 M2,16 H11 M14,2 V6 M14,9 V13" stroke="#000" stroke-width="1" fill="none"/></g></svg><svg style="position:absolute;left:698px;top:106px" width="17" height="17" viewBox="0 0 17 17" shape-rendering="crispEdges"><g shape-rendering="crispEdges"><path d="M1,1 H16 M1,16 H16" stroke="#ff0000" stroke-width="1" fill="none"/><path d="M3,14 L9,2 L13,9" stroke="#000" stroke-width="1" fill="none"/><text x="7" y="15" font-size="10" font-family="Liberation Sans" fill="#ff0000">%</text></g></svg><svg style="position:absolute;left:721px;top:106px" width="17" height="17" viewBox="0 0 17 17" shape-rendering="crispEdges"><g shape-rendering="crispEdges"><text x="8.5" y="14" font-size="14" font-family="Liberation Sans" text-anchor="middle" fill="#000">%</text></g></svg><svg style="position:absolute;left:744px;top:106px" width="17" height="17" viewBox="0 0 17 17" shape-rendering="crispEdges"><g shape-rendering="crispEdges"><path d="M5,1 H16 M9,5 H16 M9,9 H16 M1,16 H16" stroke="#000" stroke-width="1" fill="none"/><text x="0" y="14" font-size="10" font-family="Liberation Sans" fill="#ff0000">%</text></g></svg><svg style="position:absolute;left:767px;top:106px" width="17" height="17" viewBox="0 0 17 17" shape-rendering="crispEdges"><g shape-rendering="crispEdges"><circle cx="8.5" cy="9" r="7" fill="#f0f0e0" stroke="#a0a080" stroke-width="1"/><text x="8.5" y="13.5" font-size="10" font-family="Liberation Sans" text-anchor="middle" fill="#808000">金</text></g></svg><svg style="position:absolute;left:790px;top:106px" width="17" height="17" viewBox="0 0 17 17" shape-rendering="crispEdges"><g shape-rendering="crispEdges"><path d="M3,1 H16 M8,5 H16 M10,9 H16 M1,16 H16" stroke="#000" stroke-width="1" fill="none"/><text x="6" y="16" font-size="10" font-family="Liberation Sans" text-anchor="middle" fill="#808000">金</text></g></svg><svg style="position:absolute;left:813px;top:106px" width="17" height="17" viewBox="0 0 17 17" shape-rendering="crispEdges"><g shape-rendering="crispEdges"><path d="M3,1 V17 M0,6 H6 M0,11 H6 M0,16 H6" stroke="#000" stroke-width="1" fill="none"/><polygon points="7,15 10,5 15,7 12,16" fill="#909090" stroke="#000" stroke-width="0.8"/><polygon points="10,5 13,1 17,4 15,7" fill="#ff0000"/></g></svg><svg style="position:absolute;left:836px;top:106px" width="17" height="17" viewBox="0 0 17 17" shape-rendering="crispEdges"><g shape-rendering="crispEdges"><path d="M1,1 H16 M1,16 H16" stroke="#ff0000" stroke-width="1" fill="none"/><path d="M1,8.5 H16" stroke="#909090" stroke-width="1" fill="none"/><path d="M1,12 Q4,0 8,8 Q12,16 16,4" stroke="#808080" stroke-width="1" fill="none"/></g></svg><svg style="position:absolute;left:859px;top:106px" width="17" height="17" viewBox="0 0 17 17" shape-rendering="crispEdges"><g shape-rendering="crispEdges"><path d="M1,1 H16 M1,16 H16" stroke="#ff0000" stroke-width="1" fill="none"/><text x="8.5" y="14" font-size="11" font-family="Liberation Sans" text-anchor="middle" fill="#808000">金</text></g></svg><svg style="position:absolute;left:882px;top:106px" width="17" height="17" viewBox="0 0 17 17" shape-rendering="crispEdges"><g shape-rendering="crispEdges"><path d="M1,16 L16,3 M4,16 H16 M7,12 H16 M11,8 H16" stroke="#000" stroke-width="1" fill="none"/><path d="M5,2 V8 Q5,11 2,10" stroke="#ff0000" stroke-width="1.6" fill="none"/></g></svg><svg style="position:absolute;left:905px;top:106px" width="17" height="17" viewBox="0 0 17 17" shape-rendering="crispEdges"><g shape-rendering="crispEdges"><path d="M1,16 L16,3 M4,16 H16 M7,12 H16 M11,8 H16" stroke="#000" stroke-width="1" fill="none"/><path d="M2,1 V11 M2,1.5 H8 M2,6 H7" stroke="#ff0000" stroke-width="1.8" fill="none"/></g></svg><svg style="position:absolute;left:927px;top:106px" width="17" height="17" viewBox="0 0 17 17" shape-rendering="crispEdges"><g shape-rendering="crispEdges"><path d="M1,16 L16,3 M4,16 H16 M7,12 H16 M11,8 H16" stroke="#000" stroke-width="1" fill="none"/><text x="5" y="11" font-size="9" font-family="Liberation Sans" text-anchor="middle" fill="#808000">金</text></g></svg><svg style="position:absolute;left:950px;top:106px" width="17" height="17" viewBox="0 0 17 17" shape-rendering="crispEdges"><g shape-rendering="crispEdges"><path d="M1,16 L16,3 M4,16 H16 M7,12 H16 M11,8 H16" stroke="#000" stroke-width="1" fill="none"/><text x="0" y="11" font-size="10" font-weight="bold" font-family="Liberation Sans" fill="#ff0000">神</text></g></svg><svg style="position:absolute;left:973px;top:106px" width="17" height="17" viewBox="0 0 17 17" shape-rendering="crispEdges"><g shape-rendering="crispEdges"><path d="M1,16 L16,3 M4,16 H16 M7,12 H16 M11,8 H16" stroke="#000" stroke-width="1" fill="none"/><text x="0" y="12" font-size="10" font-weight="bold" font-family="Liberation Sans" fill="#ff0000">赢</text></g></svg><svg style="position:absolute;left:996px;top:106px" width="17" height="17" viewBox="0 0 17 17" shape-rendering="crispEdges"><g shape-rendering="crispEdges"><path d="M1,16 L16,3 M4,16 H16 M7,12 H16 M11,8 H16" stroke="#000" stroke-width="1" fill="none"/><rect x="1.5" y="1.5" width="8" height="8" fill="none" stroke="#ff0000" stroke-width="1"/><path d="M4,2 V6 M7,2 V6" stroke="#ff0000" stroke-width="1"/></g></svg><svg width="1239" height="592" viewBox="0 0 1239 592" style="position:absolute;left:0;top:0" shape-rendering="crispEdges"><rect x="70" y="140" width="1169" height="1" fill="#a0a0a0"/><line x1="70" y1="524.5" x2="1239" y2="524.5" stroke="#909090" stroke-width="1" stroke-dasharray="3 3"/><line x1="70" y1="542.5" x2="1239" y2="542.5" stroke="#909090" stroke-width="1" stroke-dasharray="3 3"/><line x1="70" y1="558.5" x2="1239" y2="558.5" stroke="#909090" stroke-width="1" stroke-dasharray="3 3"/><line x1="70" y1="574.5" x2="1239" y2="574.5" stroke="#909090" stroke-width="1" stroke-dasharray="3 3"/><rect x="70" y="325" width="1090" height="1" fill="#808080"/><rect x="70" y="347" width="1098" height="1" fill="#000080"/><rect x="70" y="414" width="1098" height="1" fill="#800080"/><rect x="70" y="482" width="1098" height="1" fill="#008080"/><rect x="70" y="504" width="1090" height="1" fill="#0000ff"/><rect x="70" y="260" width="101" height="1" fill="#ff0000"/><rect x="171" y="158" width="1" height="366" fill="#ff0000"/><rect x="310" y="158" width="1" height="366" fill="#0000ff"/><rect x="353" y="158" width="1" height="366" fill="#008080"/><rect x="396" y="158" width="1" height="366" fill="#800080"/><rect x="535" y="158" width="1" height="366" fill="#ff0000"/><rect x="674" y="158" width="1" height="366" fill="#0000ff"/><rect x="717" y="158" width="1" height="366" fill="#008080"/><rect x="760" y="158" width="1" height="366" fill="#800080"/><rect x="899" y="158" width="1" height="366" fill="#ff0000"/><rect x="1038" y="158" width="1" height="366" fill="#0000ff"/><rect x="1081" y="158" width="1" height="366" fill="#008080"/><rect x="1124" y="158" width="1" height="366" fill="#800080"/><line x1="1029" y1="453.5" x2="1239" y2="453.5" stroke="#808080" stroke-width="1" stroke-dasharray="6 1"/><rect x="73" y="360" width="1" height="3" fill="#ff0000"/><rect x="73" y="380" width="1" height="11" fill="#ff0000"/><rect x="70.5" y="363.5" width="5" height="16" fill="none" stroke="#ff0000" stroke-width="1"/><rect x="80" y="296" width="1" height="22" fill="#ff0000"/><rect x="80" y="362" width="1" height="2" fill="#ff0000"/><rect x="77.5" y="318.5" width="5" height="43" fill="none" stroke="#ff0000" stroke-width="1"/><rect x="87" y="304" width="1" height="5" fill="#ff0000"/><rect x="84.5" y="239.5" width="5" height="64" fill="none" stroke="#ff0000" stroke-width="1"/><rect x="94" y="233" width="1" height="21" fill="#008000"/><rect x="91" y="238" width="6" height="7" fill="#008000"/><rect x="101" y="234" width="1" height="20" fill="#ff0000"/><rect x="98.5" y="227.5" width="5" height="6" fill="none" stroke="#ff0000" stroke-width="1"/><rect x="108" y="240" width="1" height="25" fill="#ff0000"/><rect x="105.5" y="228.5" width="5" height="11" fill="none" stroke="#ff0000" stroke-width="1"/><rect x="115" y="223" width="1" height="27" fill="#008000"/><rect x="112" y="227" width="6" height="13" fill="#008000"/><rect x="122" y="224" width="1" height="29" fill="#ff0000"/><rect x="122" y="255" width="1" height="7" fill="#ff0000"/><rect x="119.5" y="253.5" width="5" height="1" fill="none" stroke="#ff0000" stroke-width="1"/><rect x="129" y="246" width="1" height="20" fill="#008000"/><rect x="126" y="256" width="6" height="2" fill="#008000"/><rect x="136" y="227" width="1" height="7" fill="#ff0000"/><rect x="136" y="259" width="1" height="7" fill="#ff0000"/><rect x="133.5" y="234.5" width="5" height="24" fill="none" stroke="#ff0000" stroke-width="1"/><rect x="143" y="192" width="1" height="19" fill="#ff0000"/><rect x="143" y="230" width="1" height="3" fill="#ff0000"/><rect x="140.5" y="211.5" width="5" height="18" fill="none" stroke="#ff0000" stroke-width="1"/><rect x="150" y="205" width="1" height="15" fill="#008000"/><rect x="147" y="209" width="6" height="2" fill="#008000"/><rect x="157" y="195" width="1" height="32" fill="#ff0000"/><rect x="157" y="232" width="1" height="39" fill="#ff0000"/><rect x="154.5" y="227.5" width="5" height="4" fill="none" stroke="#ff0000" stroke-width="1"/><rect x="164" y="200" width="1" height="7" fill="#ff0000"/><rect x="164" y="240" width="1" height="5" fill="#ff0000"/><rect x="161.5" y="207.5" width="5" height="32" fill="none" stroke="#ff0000" stroke-width="1"/><rect x="171" y="158" width="1" height="12" fill="#ff0000"/><rect x="168.5" y="170.5" width="5" height="39" fill="none" stroke="#ff0000" stroke-width="1"/><rect x="178" y="166" width="1" height="20" fill="#008000"/><rect x="175" y="168" width="6" height="8" fill="#008000"/><rect x="185" y="175" width="1" height="24" fill="#008000"/><rect x="182" y="181" width="6" height="7" fill="#008000"/><rect x="192" y="174" width="1" height="21" fill="#008000"/><rect x="189" y="182" width="6" height="5" fill="#008000"/><rect x="199" y="172" width="1" height="23" fill="#008000"/><rect x="196" y="185" width="6" height="3" fill="#008000"/><rect x="206" y="199" width="1" height="46" fill="#008000"/><rect x="203" y="199" width="6" height="31" fill="#008000"/><rect x="213" y="217" width="1" height="15" fill="#ff0000"/><rect x="213" y="238" width="1" height="5" fill="#ff0000"/><rect x="210.5" y="232.5" width="5" height="5" fill="none" stroke="#ff0000" stroke-width="1"/><rect x="220" y="230" width="1" height="11" fill="#ff0000"/><rect x="220" y="252" width="1" height="4" fill="#ff0000"/><rect x="217.5" y="241.5" width="5" height="10" fill="none" stroke="#ff0000" stroke-width="1"/><rect x="227" y="235" width="1" height="52" fill="#008000"/><rect x="224" y="239" width="6" height="47" fill="#008000"/><rect x="234" y="281" width="1" height="23" fill="#008000"/><rect x="231" y="285" width="6" height="13" fill="#008000"/><rect x="241" y="292" width="1" height="17" fill="#008000"/><rect x="238" y="299" width="6" height="3" fill="#008000"/><rect x="248" y="289" width="1" height="41" fill="#008000"/><rect x="245" y="295" width="6" height="33" fill="#008000"/><rect x="255" y="325" width="1" height="60" fill="#008000"/><rect x="252" y="327" width="6" height="56" fill="#008000"/><rect x="262" y="364" width="1" height="13" fill="#ff0000"/><rect x="262" y="379" width="1" height="26" fill="#ff0000"/><rect x="259.5" y="377.5" width="5" height="1" fill="none" stroke="#ff0000" stroke-width="1"/><rect x="269" y="349" width="1" height="40" fill="#008000"/><rect x="266" y="371" width="6" height="2" fill="#008000"/><rect x="276" y="354" width="1" height="1" fill="#ff0000"/><rect x="276" y="371" width="1" height="8" fill="#ff0000"/><rect x="273.5" y="355.5" width="5" height="15" fill="none" stroke="#ff0000" stroke-width="1"/><rect x="283" y="360" width="1" height="40" fill="#008000"/><rect x="280" y="360" width="6" height="37" fill="#008000"/><rect x="290" y="350" width="1" height="12" fill="#ff0000"/><rect x="290" y="396" width="1" height="6" fill="#ff0000"/><rect x="287.5" y="362.5" width="5" height="33" fill="none" stroke="#ff0000" stroke-width="1"/><rect x="297" y="349" width="1" height="21" fill="#008000"/><rect x="294" y="352" width="6" height="14" fill="#008000"/><rect x="304" y="338" width="1" height="5" fill="#ff0000"/><rect x="304" y="375" width="1" height="6" fill="#ff0000"/><rect x="301.5" y="343.5" width="5" height="31" fill="none" stroke="#ff0000" stroke-width="1"/><rect x="311" y="347" width="1" height="14" fill="#008000"/><rect x="308" y="348" width="6" height="4" fill="#008000"/><rect x="318" y="362" width="1" height="32" fill="#008000"/><rect x="315" y="362" width="6" height="23" fill="#008000"/><rect x="325" y="391" width="1" height="57" fill="#008000"/><rect x="322" y="391" width="6" height="42" fill="#008000"/><rect x="332" y="424" width="1" height="7" fill="#ff0000"/><rect x="332" y="448" width="1" height="7" fill="#ff0000"/><rect x="329.5" y="431.5" width="5" height="16" fill="none" stroke="#ff0000" stroke-width="1"/><rect x="339" y="412" width="1" height="32" fill="#008000"/><rect x="336" y="431" width="6" height="3" fill="#008000"/><rect x="346" y="419" width="1" height="37" fill="#008000"/><rect x="343" y="438" width="6" height="18" fill="#008000"/><rect x="353" y="455" width="1" height="25" fill="#008000"/><rect x="350" y="461" width="6" height="13" fill="#008000"/><rect x="360" y="458" width="1" height="33" fill="#008000"/><rect x="357" y="472" width="6" height="7" fill="#008000"/><rect x="367" y="456" width="1" height="1" fill="#ff0000"/><rect x="367" y="483" width="1" height="8" fill="#ff0000"/><rect x="364.5" y="457.5" width="5" height="25" fill="none" stroke="#ff0000" stroke-width="1"/><rect x="374" y="457" width="1" height="21" fill="#008000"/><rect x="371" y="460" width="6" height="2" fill="#008000"/><rect x="381" y="447" width="1" height="14" fill="#ff0000"/><rect x="381" y="463" width="1" height="11" fill="#ff0000"/><rect x="378.5" y="461.5" width="5" height="1" fill="none" stroke="#ff0000" stroke-width="1"/><rect x="388" y="469" width="1" height="21" fill="#008000"/><rect x="385" y="469" width="6" height="16" fill="#008000"/><rect x="395" y="485" width="1" height="26" fill="#008000"/><rect x="392" y="489" width="6" height="13" fill="#008000"/><rect x="402" y="479" width="1" height="3" fill="#ff0000"/><rect x="399.5" y="482.5" width="5" height="19" fill="none" stroke="#ff0000" stroke-width="1"/><rect x="409" y="424" width="1" height="1" fill="#ff0000"/><rect x="406.5" y="425.5" width="5" height="54" fill="none" stroke="#ff0000" stroke-width="1"/><rect x="416" y="425" width="1" height="16" fill="#008000"/><rect x="413" y="430" width="6" height="7" fill="#008000"/><rect x="423" y="413" width="1" height="9" fill="#ff0000"/><rect x="423" y="443" width="1" height="5" fill="#ff0000"/><rect x="420.5" y="422.5" width="5" height="20" fill="none" stroke="#ff0000" stroke-width="1"/><rect x="430" y="435" width="1" height="18" fill="#008000"/><rect x="427" y="435" width="6" height="14" fill="#008000"/><rect x="437" y="431" width="1" height="11" fill="#ff0000"/><rect x="437" y="445" width="1" height="13" fill="#ff0000"/><rect x="434.5" y="442.5" width="5" height="2" fill="none" stroke="#ff0000" stroke-width="1"/><rect x="444" y="425" width="1" height="3" fill="#ff0000"/><rect x="444" y="437" width="1" height="4" fill="#ff0000"/><rect x="441.5" y="428.5" width="5" height="8" fill="none" stroke="#ff0000" stroke-width="1"/><rect x="451" y="433" width="1" height="18" fill="#008000"/><rect x="448" y="433" width="6" height="16" fill="#008000"/><rect x="458" y="463" width="1" height="10" fill="#ff0000"/><rect x="455.5" y="434.5" width="5" height="28" fill="none" stroke="#ff0000" stroke-width="1"/><rect x="465" y="379" width="1" height="2" fill="#ff0000"/><rect x="462.5" y="381.5" width="5" height="45" fill="none" stroke="#ff0000" stroke-width="1"/><rect x="472" y="349" width="1" height="10" fill="#ff0000"/><rect x="472" y="381" width="1" height="6" fill="#ff0000"/><rect x="469.5" y="359.5" width="5" height="21" fill="none" stroke="#ff0000" stroke-width="1"/><rect x="479" y="350" width="1" height="1" fill="#ff0000"/><rect x="479" y="359" width="1" height="10" fill="#ff0000"/><rect x="476.5" y="351.5" width="5" height="7" fill="none" stroke="#ff0000" stroke-width="1"/><rect x="486" y="335" width="1" height="32" fill="#008000"/><rect x="483" y="355" width="6" height="11" fill="#008000"/><rect x="493" y="368" width="1" height="3" fill="#ff0000"/><rect x="490.5" y="343.5" width="5" height="24" fill="none" stroke="#ff0000" stroke-width="1"/><rect x="500" y="317" width="1" height="1" fill="#ff0000"/><rect x="500" y="333" width="1" height="9" fill="#ff0000"/><rect x="497.5" y="318.5" width="5" height="14" fill="none" stroke="#ff0000" stroke-width="1"/><rect x="507" y="319" width="1" height="28" fill="#008000"/><rect x="504" y="320" width="6" height="19" fill="#008000"/><rect x="514" y="296" width="1" height="13" fill="#ff0000"/><rect x="514" y="343" width="1" height="7" fill="#ff0000"/><rect x="511.5" y="309.5" width="5" height="33" fill="none" stroke="#ff0000" stroke-width="1"/><rect x="521" y="265" width="1" height="52" fill="#008000"/><rect x="518" y="296" width="6" height="18" fill="#008000"/><rect x="528" y="323" width="1" height="43" fill="#008000"/><rect x="525" y="323" width="6" height="23" fill="#008000"/><rect x="535" y="358" width="1" height="57" fill="#008000"/><rect x="532" y="364" width="6" height="29" fill="#008000"/><rect x="542" y="380" width="1" height="77" fill="#008000"/><rect x="539" y="393" width="6" height="55" fill="#008000"/><rect x="549" y="438" width="1" height="1" fill="#ff0000"/><rect x="549" y="457" width="1" height="16" fill="#ff0000"/><rect x="546.5" y="439.5" width="5" height="17" fill="none" stroke="#ff0000" stroke-width="1"/><rect x="556" y="404" width="1" height="27" fill="#ff0000"/><rect x="556" y="434" width="1" height="12" fill="#ff0000"/><rect x="553.5" y="431.5" width="5" height="2" fill="none" stroke="#ff0000" stroke-width="1"/><rect x="563" y="417" width="1" height="2" fill="#ff0000"/><rect x="563" y="439" width="1" height="26" fill="#ff0000"/><rect x="560.5" y="419.5" width="5" height="19" fill="none" stroke="#ff0000" stroke-width="1"/><rect x="570" y="391" width="1" height="4" fill="#ff0000"/><rect x="570" y="425" width="1" height="7" fill="#ff0000"/><rect x="567.5" y="395.5" width="5" height="29" fill="none" stroke="#ff0000" stroke-width="1"/><rect x="577" y="397" width="1" height="3" fill="#ff0000"/><rect x="577" y="404" width="1" height="24" fill="#ff0000"/><rect x="574.5" y="400.5" width="5" height="3" fill="none" stroke="#ff0000" stroke-width="1"/><rect x="584" y="397" width="1" height="30" fill="#008000"/><rect x="581" y="398" width="6" height="25" fill="#008000"/><rect x="591" y="407" width="1" height="8" fill="#ff0000"/><rect x="591" y="428" width="1" height="25" fill="#ff0000"/><rect x="588.5" y="415.5" width="5" height="12" fill="none" stroke="#ff0000" stroke-width="1"/><rect x="598" y="391" width="1" height="36" fill="#008000"/><rect x="595" y="417" width="6" height="2" fill="#008000"/><rect x="605" y="437" width="1" height="60" fill="#008000"/><rect x="602" y="437" width="6" height="55" fill="#008000"/><rect x="612" y="481" width="1" height="9" fill="#ff0000"/><rect x="612" y="499" width="1" height="12" fill="#ff0000"/><rect x="609.5" y="490.5" width="5" height="8" fill="none" stroke="#ff0000" stroke-width="1"/><rect x="619" y="477" width="1" height="17" fill="#ff0000"/><rect x="619" y="496" width="1" height="29" fill="#ff0000"/><rect x="616.5" y="494.5" width="5" height="1" fill="none" stroke="#ff0000" stroke-width="1"/><rect x="626" y="454" width="1" height="13" fill="#ff0000"/><rect x="626" y="491" width="1" height="6" fill="#ff0000"/><rect x="623.5" y="467.5" width="5" height="23" fill="none" stroke="#ff0000" stroke-width="1"/><rect x="633" y="469" width="1" height="34" fill="#008000"/><rect x="630" y="480" width="6" height="6" fill="#008000"/><rect x="640" y="479" width="1" height="14" fill="#ff0000"/><rect x="637.5" y="461.5" width="5" height="17" fill="none" stroke="#ff0000" stroke-width="1"/><rect x="647" y="448" width="1" height="17" fill="#008000"/><rect x="644" y="458" width="6" height="2" fill="#008000"/><rect x="654" y="467" width="1" height="22" fill="#ff0000"/><rect x="651.5" y="464.5" width="5" height="2" fill="none" stroke="#ff0000" stroke-width="1"/><rect x="661" y="453" width="1" height="47" fill="#008000"/><rect x="658" y="469" width="6" height="31" fill="#008000"/><rect x="668" y="424" width="1" height="6" fill="#ff0000"/><rect x="668" y="507" width="1" height="3" fill="#ff0000"/><rect x="665.5" y="430.5" width="5" height="76" fill="none" stroke="#ff0000" stroke-width="1"/><rect x="675" y="397" width="1" height="10" fill="#ff0000"/><rect x="675" y="426" width="1" height="10" fill="#ff0000"/><rect x="672.5" y="407.5" width="5" height="18" fill="none" stroke="#ff0000" stroke-width="1"/><rect x="682" y="390" width="1" height="15" fill="#ff0000"/><rect x="682" y="411" width="1" height="8" fill="#ff0000"/><rect x="679.5" y="405.5" width="5" height="5" fill="none" stroke="#ff0000" stroke-width="1"/><rect x="689" y="397" width="1" height="21" fill="#008000"/><rect x="686" y="401" width="6" height="9" fill="#008000"/><rect x="696" y="398" width="1" height="39" fill="#008000"/><rect x="693" y="414" width="6" height="18" fill="#008000"/><rect x="703" y="415" width="1" height="31" fill="#008000"/><rect x="700" y="431" width="6" height="6" fill="#008000"/><rect x="710" y="431" width="1" height="29" fill="#008000"/><rect x="707" y="436" width="6" height="13" fill="#008000"/><rect x="717" y="428" width="1" height="3" fill="#ff0000"/><rect x="717" y="453" width="1" height="3" fill="#ff0000"/><rect x="714.5" y="431.5" width="5" height="21" fill="none" stroke="#ff0000" stroke-width="1"/><rect x="724" y="414" width="1" height="2" fill="#ff0000"/><rect x="724" y="428" width="1" height="5" fill="#ff0000"/><rect x="721.5" y="416.5" width="5" height="11" fill="none" stroke="#ff0000" stroke-width="1"/><rect x="731" y="408" width="1" height="35" fill="#008000"/><rect x="728" y="410" width="6" height="25" fill="#008000"/><rect x="738" y="414" width="1" height="2" fill="#ff0000"/><rect x="738" y="444" width="1" height="3" fill="#ff0000"/><rect x="735.5" y="416.5" width="5" height="27" fill="none" stroke="#ff0000" stroke-width="1"/><rect x="745" y="360" width="1" height="6" fill="#ff0000"/><rect x="745" y="423" width="1" height="2" fill="#ff0000"/><rect x="742.5" y="366.5" width="5" height="56" fill="none" stroke="#ff0000" stroke-width="1"/><rect x="752" y="352" width="1" height="5" fill="#ff0000"/><rect x="752" y="363" width="1" height="7" fill="#ff0000"/><rect x="749.5" y="357.5" width="5" height="5" fill="none" stroke="#ff0000" stroke-width="1"/><rect x="759" y="304" width="1" height="16" fill="#ff0000"/><rect x="759" y="356" width="1" height="11" fill="#ff0000"/><rect x="756.5" y="320.5" width="5" height="35" fill="none" stroke="#ff0000" stroke-width="1"/><rect x="766" y="314" width="1" height="11" fill="#ff0000"/><rect x="766" y="327" width="1" height="12" fill="#ff0000"/><rect x="763.5" y="325.5" width="5" height="1" fill="none" stroke="#ff0000" stroke-width="1"/><rect x="773" y="320" width="1" height="3" fill="#ff0000"/><rect x="773" y="328" width="1" height="15" fill="#ff0000"/><rect x="770.5" y="323.5" width="5" height="4" fill="none" stroke="#ff0000" stroke-width="1"/><rect x="780" y="330" width="1" height="36" fill="#008000"/><rect x="777" y="330" width="6" height="31" fill="#008000"/><rect x="787" y="348" width="1" height="9" fill="#ff0000"/><rect x="787" y="368" width="1" height="7" fill="#ff0000"/><rect x="784.5" y="357.5" width="5" height="10" fill="none" stroke="#ff0000" stroke-width="1"/><rect x="794" y="351" width="1" height="18" fill="#008000"/><rect x="791" y="352" width="6" height="13" fill="#008000"/><rect x="801" y="364" width="1" height="2" fill="#ff0000"/><rect x="801" y="375" width="1" height="14" fill="#ff0000"/><rect x="798.5" y="366.5" width="5" height="8" fill="none" stroke="#ff0000" stroke-width="1"/><rect x="808" y="361" width="1" height="47" fill="#008000"/><rect x="805" y="381" width="6" height="26" fill="#008000"/><rect x="815" y="397" width="1" height="1" fill="#ff0000"/><rect x="815" y="411" width="1" height="21" fill="#ff0000"/><rect x="812.5" y="398.5" width="5" height="12" fill="none" stroke="#ff0000" stroke-width="1"/><rect x="822" y="395" width="1" height="20" fill="#008000"/><rect x="819" y="404" width="6" height="2" fill="#008000"/><rect x="829" y="395" width="1" height="24" fill="#008000"/><rect x="826" y="409" width="6" height="9" fill="#008000"/><rect x="836" y="408" width="1" height="38" fill="#008000"/><rect x="833" y="414" width="6" height="31" fill="#008000"/><rect x="843" y="446" width="1" height="44" fill="#008000"/><rect x="840" y="449" width="6" height="37" fill="#008000"/><rect x="850" y="464" width="1" height="1" fill="#ff0000"/><rect x="850" y="489" width="1" height="6" fill="#ff0000"/><rect x="847.5" y="465.5" width="5" height="23" fill="none" stroke="#ff0000" stroke-width="1"/><rect x="857" y="454" width="1" height="4" fill="#ff0000"/><rect x="857" y="466" width="1" height="5" fill="#ff0000"/><rect x="854.5" y="458.5" width="5" height="7" fill="none" stroke="#ff0000" stroke-width="1"/><rect x="864" y="454" width="1" height="2" fill="#ff0000"/><rect x="864" y="464" width="1" height="19" fill="#ff0000"/><rect x="861.5" y="456.5" width="5" height="7" fill="none" stroke="#ff0000" stroke-width="1"/><rect x="871" y="442" width="1" height="14" fill="#ff0000"/><rect x="871" y="461" width="1" height="4" fill="#ff0000"/><rect x="868.5" y="456.5" width="5" height="4" fill="none" stroke="#ff0000" stroke-width="1"/><rect x="878" y="462" width="1" height="18" fill="#008000"/><rect x="875" y="462" width="6" height="16" fill="#008000"/><rect x="885" y="444" width="1" height="27" fill="#ff0000"/><rect x="882.5" y="471.5" width="5" height="12" fill="none" stroke="#ff0000" stroke-width="1"/><rect x="892" y="466" width="1" height="24" fill="#008000"/><rect x="889" y="470" width="6" height="7" fill="#008000"/><rect x="896.5" y="424.5" width="5" height="38" fill="none" stroke="#ff0000" stroke-width="1"/><rect x="906" y="414" width="1" height="22" fill="#008000"/><rect x="903" y="421" width="6" height="5" fill="#008000"/><rect x="913" y="420" width="1" height="17" fill="#008000"/><rect x="910" y="428" width="6" height="2" fill="#008000"/><rect x="920" y="432" width="1" height="30" fill="#008000"/><rect x="917" y="435" width="6" height="24" fill="#008000"/><rect x="927" y="456" width="1" height="1" fill="#ff0000"/><rect x="927" y="461" width="1" height="14" fill="#ff0000"/><rect x="924.5" y="457.5" width="5" height="3" fill="none" stroke="#ff0000" stroke-width="1"/><rect x="934" y="462" width="1" height="34" fill="#008000"/><rect x="931" y="462" width="6" height="23" fill="#008000"/><rect x="941" y="469" width="1" height="19" fill="#008000"/><rect x="938" y="476" width="6" height="5" fill="#008000"/><rect x="948" y="490" width="1" height="13" fill="#ff0000"/><rect x="945.5" y="459.5" width="5" height="30" fill="none" stroke="#ff0000" stroke-width="1"/><rect x="955" y="439" width="1" height="28" fill="#008000"/><rect x="952" y="462" width="6" height="2" fill="#008000"/><rect x="962" y="467" width="1" height="3" fill="#ff0000"/><rect x="959.5" y="447.5" width="5" height="19" fill="none" stroke="#ff0000" stroke-width="1"/><rect x="969" y="434" width="1" height="12" fill="#008000"/><rect x="966" y="438" width="6" height="2" fill="#008000"/><rect x="976" y="436" width="1" height="13" fill="#008000"/><rect x="973" y="440" width="6" height="7" fill="#008000"/><rect x="983" y="424" width="1" height="3" fill="#ff0000"/><rect x="983" y="447" width="1" height="8" fill="#ff0000"/><rect x="980.5" y="427.5" width="5" height="19" fill="none" stroke="#ff0000" stroke-width="1"/><rect x="990" y="419" width="1" height="22" fill="#008000"/><rect x="987" y="425" width="6" height="14" fill="#008000"/><rect x="997" y="432" width="1" height="19" fill="#008000"/><rect x="994" y="440" width="6" height="2" fill="#008000"/><rect x="1004" y="429" width="1" height="15" fill="#008000"/><rect x="1001" y="441" width="6" height="2" fill="#008000"/><rect x="1011" y="443" width="1" height="32" fill="#008000"/><rect x="1008" y="443" width="6" height="16" fill="#008000"/><rect x="1018" y="438" width="1" height="1" fill="#ff0000"/><rect x="1018" y="467" width="1" height="5" fill="#ff0000"/><rect x="1015.5" y="439.5" width="5" height="27" fill="none" stroke="#ff0000" stroke-width="1"/><rect x="1025" y="439" width="1" height="24" fill="#008000"/><rect x="1022" y="439" width="6" height="14" fill="#008000"/><rect x="70.5" y="558.5" width="5" height="31" fill="none" stroke="#ff0000" stroke-width="1"/><rect x="77.5" y="542.5" width="5" height="47" fill="none" stroke="#ff0000" stroke-width="1"/><rect x="84.5" y="530.5" width="5" height="59" fill="none" stroke="#ff0000" stroke-width="1"/><rect x="91" y="543" width="6" height="47" fill="#008000"/><rect x="98.5" y="545.5" width="5" height="44" fill="none" stroke="#ff0000" stroke-width="1"/><rect x="105.5" y="538.5" width="5" height="51" fill="none" stroke="#ff0000" stroke-width="1"/><rect x="112" y="547" width="6" height="43" fill="#008000"/><rect x="119.5" y="549.5" width="5" height="40" fill="none" stroke="#ff0000" stroke-width="1"/><rect x="126" y="552" width="6" height="38" fill="#008000"/><rect x="133.5" y="546.5" width="5" height="43" fill="none" stroke="#ff0000" stroke-width="1"/><rect x="140.5" y="539.5" width="5" height="50" fill="none" stroke="#ff0000" stroke-width="1"/><rect x="147" y="549" width="6" height="41" fill="#008000"/><rect x="154.5" y="524.5" width="5" height="65" fill="none" stroke="#ff0000" stroke-width="1"/><rect x="161.5" y="547.5" width="5" height="42" fill="none" stroke="#ff0000" stroke-width="1"/><rect x="168.5" y="530.5" width="5" height="59" fill="none" stroke="#ff0000" stroke-width="1"/><rect x="175" y="544" width="6" height="46" fill="#008000"/><rect x="182" y="551" width="6" height="39" fill="#008000"/><rect x="189" y="555" width="6" height="35" fill="#008000"/><rect x="196" y="549" width="6" height="41" fill="#008000"/><rect x="203" y="549" width="6" height="41" fill="#008000"/><rect x="210.5" y="557.5" width="5" height="32" fill="none" stroke="#ff0000" stroke-width="1"/><rect x="217.5" y="558.5" width="5" height="31" fill="none" stroke="#ff0000" stroke-width="1"/><rect x="224" y="552" width="6" height="38" fill="#008000"/><rect x="231" y="560" width="6" height="30" fill="#008000"/><rect x="238" y="566" width="6" height="24" fill="#008000"/><rect x="245" y="562" width="6" height="28" fill="#008000"/><rect x="252" y="557" width="6" height="33" fill="#008000"/><rect x="259.5" y="564.5" width="5" height="25" fill="none" stroke="#ff0000" stroke-width="1"/><rect x="266" y="563" width="6" height="27" fill="#008000"/><rect x="273.5" y="565.5" width="5" height="24" fill="none" stroke="#ff0000" stroke-width="1"/><rect x="280" y="560" width="6" height="30" fill="#008000"/><rect x="287.5" y="561.5" width="5" height="28" fill="none" stroke="#ff0000" stroke-width="1"/><rect x="294" y="562" width="6" height="28" fill="#008000"/><rect x="301.5" y="560.5" width="5" height="29" fill="none" stroke="#ff0000" stroke-width="1"/><rect x="308" y="564" width="6" height="26" fill="#008000"/><rect x="315" y="558" width="6" height="32" fill="#008000"/><rect x="322" y="556" width="6" height="34" fill="#008000"/><rect x="329.5" y="566.5" width="5" height="23" fill="none" stroke="#ff0000" stroke-width="1"/><rect x="336" y="563" width="6" height="27" fill="#008000"/><rect x="343" y="561" width="6" height="29" fill="#008000"/><rect x="350" y="561" width="6" height="29" fill="#008000"/><rect x="357" y="565" width="6" height="25" fill="#008000"/><rect x="364.5" y="563.5" width="5" height="26" fill="none" stroke="#ff0000" stroke-width="1"/><rect x="371" y="564" width="6" height="26" fill="#008000"/><rect x="378.5" y="562.5" width="5" height="27" fill="none" stroke="#ff0000" stroke-width="1"/><rect x="385" y="565" width="6" height="25" fill="#008000"/><rect x="392" y="569" width="6" height="21" fill="#008000"/><rect x="399.5" y="567.5" width="5" height="22" fill="none" stroke="#ff0000" stroke-width="1"/><rect x="406.5" y="553.5" width="5" height="36" fill="none" stroke="#ff0000" stroke-width="1"/><rect x="413" y="558" width="6" height="32" fill="#008000"/><rect x="420.5" y="555.5" width="5" height="34" fill="none" stroke="#ff0000" stroke-width="1"/><rect x="427" y="556" width="6" height="34" fill="#008000"/><rect x="434.5" y="563.5" width="5" height="26" fill="none" stroke="#ff0000" stroke-width="1"/><rect x="441.5" y="562.5" width="5" height="27" fill="none" stroke="#ff0000" stroke-width="1"/><rect x="448" y="566" width="6" height="24" fill="#008000"/><rect x="455.5" y="562.5" width="5" height="27" fill="none" stroke="#ff0000" stroke-width="1"/><rect x="462.5" y="543.5" width="5" height="46" fill="none" stroke="#ff0000" stroke-width="1"/><rect x="469.5" y="536.5" width="5" height="53" fill="none" stroke="#ff0000" stroke-width="1"/><rect x="476.5" y="542.5" width="5" height="47" fill="none" stroke="#ff0000" stroke-width="1"/><rect x="483" y="535" width="6" height="55" fill="#008000"/><rect x="490.5" y="548.5" width="5" height="41" fill="none" stroke="#ff0000" stroke-width="1"/><rect x="497.5" y="537.5" width="5" height="52" fill="none" stroke="#ff0000" stroke-width="1"/><rect x="504" y="536" width="6" height="54" fill="#008000"/><rect x="511.5" y="533.5" width="5" height="56" fill="none" stroke="#ff0000" stroke-width="1"/><rect x="518" y="531" width="6" height="59" fill="#008000"/><rect x="525" y="545" width="6" height="45" fill="#008000"/><rect x="532" y="543" width="6" height="47" fill="#008000"/><rect x="539" y="537" width="6" height="53" fill="#008000"/><rect x="546.5" y="548.5" width="5" height="41" fill="none" stroke="#ff0000" stroke-width="1"/><rect x="553.5" y="540.5" width="5" height="49" fill="none" stroke="#ff0000" stroke-width="1"/><rect x="560.5" y="548.5" width="5" height="41" fill="none" stroke="#ff0000" stroke-width="1"/><rect x="567.5" y="542.5" width="5" height="47" fill="none" stroke="#ff0000" stroke-width="1"/><rect x="574.5" y="546.5" width="5" height="43" fill="none" stroke="#ff0000" stroke-width="1"/><rect x="581" y="549" width="6" height="41" fill="#008000"/><rect x="588.5" y="549.5" width="5" height="40" fill="none" stroke="#ff0000" stroke-width="1"/><rect x="595" y="551" width="6" height="39" fill="#008000"/><rect x="602" y="546" width="6" height="44" fill="#008000"/><rect x="609.5" y="555.5" width="5" height="34" fill="none" stroke="#ff0000" stroke-width="1"/><rect x="616.5" y="552.5" width="5" height="37" fill="none" stroke="#ff0000" stroke-width="1"/><rect x="623.5" y="552.5" width="5" height="37" fill="none" stroke="#ff0000" stroke-width="1"/><rect x="630" y="557" width="6" height="33" fill="#008000"/><rect x="637.5" y="557.5" width="5" height="32" fill="none" stroke="#ff0000" stroke-width="1"/><rect x="644" y="553" width="6" height="37" fill="#008000"/><rect x="651.5" y="554.5" width="5" height="35" fill="none" stroke="#ff0000" stroke-width="1"/><rect x="658" y="548" width="6" height="42" fill="#008000"/><rect x="665.5" y="535.5" width="5" height="54" fill="none" stroke="#ff0000" stroke-width="1"/><rect x="672.5" y="534.5" width="5" height="55" fill="none" stroke="#ff0000" stroke-width="1"/><rect x="679.5" y="540.5" width="5" height="49" fill="none" stroke="#ff0000" stroke-width="1"/><rect x="686" y="551" width="6" height="39" fill="#008000"/><rect x="693" y="545" width="6" height="45" fill="#008000"/><rect x="700" y="544" width="6" height="46" fill="#008000"/><rect x="707" y="554" width="6" height="36" fill="#008000"/><rect x="714.5" y="558.5" width="5" height="31" fill="none" stroke="#ff0000" stroke-width="1"/><rect x="721.5" y="551.5" width="5" height="38" fill="none" stroke="#ff0000" stroke-width="1"/><rect x="728" y="549" width="6" height="41" fill="#008000"/><rect x="735.5" y="558.5" width="5" height="31" fill="none" stroke="#ff0000" stroke-width="1"/><rect x="742.5" y="539.5" width="5" height="50" fill="none" stroke="#ff0000" stroke-width="1"/><rect x="749.5" y="550.5" width="5" height="39" fill="none" stroke="#ff0000" stroke-width="1"/><rect x="756.5" y="531.5" width="5" height="58" fill="none" stroke="#ff0000" stroke-width="1"/><rect x="763.5" y="540.5" width="5" height="49" fill="none" stroke="#ff0000" stroke-width="1"/><rect x="770.5" y="551.5" width="5" height="38" fill="none" stroke="#ff0000" stroke-width="1"/><rect x="777" y="549" width="6" height="41" fill="#008000"/><rect x="784.5" y="556.5" width="5" height="33" fill="none" stroke="#ff0000" stroke-width="1"/><rect x="791" y="556" width="6" height="34" fill="#008000"/><rect x="798.5" y="557.5" width="5" height="32" fill="none" stroke="#ff0000" stroke-width="1"/><rect x="805" y="554" width="6" height="36" fill="#008000"/><rect x="812.5" y="553.5" width="5" height="36" fill="none" stroke="#ff0000" stroke-width="1"/><rect x="819" y="560" width="6" height="30" fill="#008000"/><rect x="826" y="560" width="6" height="30" fill="#008000"/><rect x="833" y="555" width="6" height="35" fill="#008000"/><rect x="840" y="556" width="6" height="34" fill="#008000"/><rect x="847.5" y="561.5" width="5" height="28" fill="none" stroke="#ff0000" stroke-width="1"/><rect x="854.5" y="562.5" width="5" height="27" fill="none" stroke="#ff0000" stroke-width="1"/><rect x="861.5" y="560.5" width="5" height="29" fill="none" stroke="#ff0000" stroke-width="1"/><rect x="868.5" y="562.5" width="5" height="27" fill="none" stroke="#ff0000" stroke-width="1"/><rect x="875" y="562" width="6" height="28" fill="#008000"/><rect x="882.5" y="561.5" width="5" height="28" fill="none" stroke="#ff0000" stroke-width="1"/><rect x="889" y="561" width="6" height="29" fill="#008000"/><rect x="896.5" y="546.5" width="5" height="43" fill="none" stroke="#ff0000" stroke-width="1"/><rect x="903" y="553" width="6" height="37" fill="#008000"/><rect x="910" y="563" width="6" height="27" fill="#008000"/><rect x="917" y="561" width="6" height="29" fill="#008000"/><rect x="924.5" y="565.5" width="5" height="24" fill="none" stroke="#ff0000" stroke-width="1"/><rect x="931" y="565" width="6" height="25" fill="#008000"/><rect x="938" y="567" width="6" height="23" fill="#008000"/><rect x="945.5" y="567.5" width="5" height="22" fill="none" stroke="#ff0000" stroke-width="1"/><rect x="952" y="562" width="6" height="28" fill="#008000"/><rect x="959.5" y="566.5" width="5" height="23" fill="none" stroke="#ff0000" stroke-width="1"/><rect x="966" y="563" width="6" height="27" fill="#008000"/><rect x="973" y="564" width="6" height="26" fill="#008000"/><rect x="980.5" y="559.5" width="5" height="30" fill="none" stroke="#ff0000" stroke-width="1"/><rect x="987" y="559" width="6" height="31" fill="#008000"/><rect x="994" y="562" width="6" height="28" fill="#008000"/><rect x="1001" y="563" width="6" height="27" fill="#008000"/><rect x="1008" y="563" width="6" height="27" fill="#008000"/><rect x="1015.5" y="564.5" width="5" height="25" fill="none" stroke="#ff0000" stroke-width="1"/><rect x="1022" y="565" width="6" height="25" fill="#008000"/><line x1="171.5" y1="158.5" x2="190.5" y2="163.5" stroke="#0000ff" stroke-width="1"/><line x1="619.5" y1="524.5" x2="639.5" y2="519.5" stroke="#0000ff" stroke-width="1"/><path d="M174,161 h1 M175,160 v7 M174,167 h3" stroke="#ff0000" stroke-width="1" fill="none" transform="translate(0.5,0.5)"/><polygon points="206,524 210,528 202,528" fill="#000"/><rect x="0" y="590" width="1239" height="2" fill="#a0a0a0"/></svg><div class="t" style="left:3px;top:134px;font-size:12px;color:#0000ff;">日K线</div><div class="t" style="left:70px;top:130px;font-size:9.5px;color:#909090;transform:scaleX(0.696);transform-origin:0 0;">11-14</div><div class="t" style="left:130px;top:130px;font-size:9.5px;color:#909090;transform:scaleX(0.766);transform-origin:0 0;">11-28</div><div class="t" style="left:199px;top:130px;font-size:9.5px;color:#909090;transform:scaleX(0.766);transform-origin:0 0;">12-12</div><div class="t" style="left:269px;top:130px;font-size:9.5px;color:#909090;transform:scaleX(0.836);transform-origin:0 0;">12-26</div><div class="t" style="left:339px;top:130px;font-size:9.5px;color:#909090;transform:scaleX(0.766);transform-origin:0 0;">01-10</div><div class="t" style="left:409px;top:130px;font-size:9.5px;color:#909090;transform:scaleX(0.836);transform-origin:0 0;">01-24</div><div class="t" style="left:479px;top:130px;font-size:9.5px;color:#909090;transform:scaleX(0.836);transform-origin:0 0;">02-14</div><div class="t" style="left:549px;top:130px;font-size:9.5px;color:#909090;transform:scaleX(0.906);transform-origin:0 0;">02-28</div><div class="t" style="left:619px;top:130px;font-size:9.5px;color:#909090;transform:scaleX(0.836);transform-origin:0 0;">03-14</div><div class="t" style="left:689px;top:130px;font-size:9.5px;color:#909090;transform:scaleX(0.906);transform-origin:0 0;">03-28</div><div class="t" style="left:759px;top:130px;font-size:9.5px;color:#909090;transform:scaleX(0.836);transform-origin:0 0;">04-14</div><div class="t" style="left:829px;top:130px;font-size:9.5px;color:#909090;transform:scaleX(0.906);transform-origin:0 0;">04-28</div><div class="t" style="left:899px;top:130px;font-size:9.5px;color:#909090;transform:scaleX(0.836);transform-origin:0 0;">05-14</div><div class="t" style="left:969px;top:130px;font-size:9.5px;color:#909090;transform:scaleX(0.906);transform-origin:0 0;">05-28</div><div class="t" style="left:1039px;top:130px;font-size:9.5px;color:#909090;transform:scaleX(0.836);transform-origin:0 0;">06-12</div><div class="t" style="left:1109px;top:130px;font-size:9.5px;color:#909090;transform:scaleX(0.906);transform-origin:0 0;">06-26</div><div class="t" style="left:1179px;top:130px;font-size:9.5px;color:#909090;transform:scaleX(0.836);transform-origin:0 0;">07-10</div><div class="t" style="left:1140px;top:143px;font-size:12px;color:#0000ff;font-family:'Liberation Mono', monospace;letter-spacing:-0.7px;">1A0001</div><div class="t" style="left:1189px;top:142px;font-size:13px;color:#0000ff;">上证指数</div><div class="t" style="left:312px;top:169px;font-size:12px;color:#0000ff;font-family:'Liberation Mono', monospace;letter-spacing:-1.5px;">1.382</div><div class="t" style="left:355px;top:169px;font-size:12px;color:#008080;font-family:'Liberation Mono', monospace;letter-spacing:-1.5px;">1.5</div><div class="t" style="left:398px;top:169px;font-size:12px;color:#800080;font-family:'Liberation Mono', monospace;letter-spacing:-1.5px;">1.618</div><div class="t" style="left:537px;top:169px;font-size:12px;color:#ff0000;font-family:'Liberation Mono', monospace;letter-spacing:-1.5px;">2</div><div class="t" style="left:676px;top:169px;font-size:12px;color:#0000ff;font-family:'Liberation Mono', monospace;letter-spacing:-1.5px;">2.382</div><div class="t" style="left:719px;top:169px;font-size:12px;color:#008080;font-family:'Liberation Mono', monospace;letter-spacing:-1.5px;">2.5</div><div class="t" style="left:762px;top:169px;font-size:12px;color:#800080;font-family:'Liberation Mono', monospace;letter-spacing:-1.5px;">2.618</div><div class="t" style="left:901px;top:169px;font-size:12px;color:#ff0000;font-family:'Liberation Mono', monospace;letter-spacing:-1.5px;">3</div><div class="t" style="left:1040px;top:169px;font-size:12px;color:#0000ff;font-family:'Liberation Mono', monospace;letter-spacing:-1.5px;">3.382</div><div class="t" style="left:1083px;top:169px;font-size:12px;color:#008080;font-family:'Liberation Mono', monospace;letter-spacing:-1.5px;">3.5</div><div class="t" style="left:1126px;top:169px;font-size:12px;color:#800080;font-family:'Liberation Mono', monospace;letter-spacing:-1.5px;">3.618</div><div class="t" style="left:173px;top:470px;font-size:12px;color:#ff0000;font-family:'Liberation Mono', monospace;letter-spacing:-1.5px;">52</div><div class="t" style="left:312px;top:470px;font-size:12px;color:#0000ff;font-family:'Liberation Mono', monospace;letter-spacing:-1.5px;">72</div><div class="t" style="left:355px;top:470px;font-size:12px;color:#008080;font-family:'Liberation Mono', monospace;letter-spacing:-1.5px;">78</div><div class="t" style="left:398px;top:470px;font-size:12px;color:#800080;font-family:'Liberation Mono', monospace;letter-spacing:-1.5px;">84</div><div class="t" style="left:537px;top:470px;font-size:12px;color:#ff0000;font-family:'Liberation Mono', monospace;letter-spacing:-1.5px;">104</div><div class="t" style="left:676px;top:470px;font-size:12px;color:#0000ff;font-family:'Liberation Mono', monospace;letter-spacing:-1.5px;">124</div><div class="t" style="left:719px;top:470px;font-size:12px;color:#008080;font-family:'Liberation Mono', monospace;letter-spacing:-1.5px;">130</div><div class="t" style="left:762px;top:470px;font-size:12px;color:#800080;font-family:'Liberation Mono', monospace;letter-spacing:-1.5px;">136</div><div class="t" style="left:901px;top:470px;font-size:12px;color:#ff0000;font-family:'Liberation Mono', monospace;letter-spacing:-1.5px;">156</div><div class="t" style="left:1040px;top:470px;font-size:12px;color:#0000ff;font-family:'Liberation Mono', monospace;letter-spacing:-1.5px;">176</div><div class="t" style="left:1083px;top:470px;font-size:12px;color:#008080;font-family:'Liberation Mono', monospace;letter-spacing:-1.5px;">182</div><div class="t" style="left:1126px;top:470px;font-size:12px;color:#800080;font-family:'Liberation Mono', monospace;letter-spacing:-1.5px;">188</div><div class="t" style="right:4px;top:319px;font-size:13px;color:#808080;-webkit-text-stroke:0.25px #808080">66.67%(240)</div><div class="t" style="right:4px;top:341px;font-size:13px;color:#000080;-webkit-text-stroke:0.25px #000080">62.5%(225)</div><div class="t" style="right:4px;top:408px;font-size:13px;color:#800080;-webkit-text-stroke:0.25px #800080">50.0%(180)</div><div class="t" style="right:4px;top:476px;font-size:13px;color:#008080;-webkit-text-stroke:0.25px #008080">37.5%(135)</div><div class="t" style="right:4px;top:498px;font-size:13px;color:#0000ff;-webkit-text-stroke:0.25px #0000ff">33.33%(120)</div><div class="t" style="left:192px;top:164px;font-size:12px;color:#0000ff;">2260.8701</div><div class="t" style="left:640px;top:512px;font-size:12px;color:#0000ff;">1974.3800</div><div class="t" style="right:1172px;top:513px;font-size:12px;color:#404040;font-family:'Liberation Mono', monospace;letter-spacing:-1.2px">1974.3800</div><div class="t" style="right:1172px;top:538px;font-size:12px;color:#404040;font-family:'Liberation Mono', monospace;letter-spacing:-1.2px">126750535</div><div class="t" style="right:1172px;top:554px;font-size:12px;color:#404040;font-family:'Liberation Mono', monospace;letter-spacing:-1.2px">84500357</div><div class="t" style="right:1172px;top:570px;font-size:12px;color:#404040;font-family:'Liberation Mono', monospace;letter-spacing:-1.2px">42250178</div><div class="t" style="left:1083px;top:553px;font-size:29px;color:#ff0000;font-family:'Liberation Serif',serif;font-weight:200;letter-spacing:1px;">赢家财富网</div>
</body></html>
